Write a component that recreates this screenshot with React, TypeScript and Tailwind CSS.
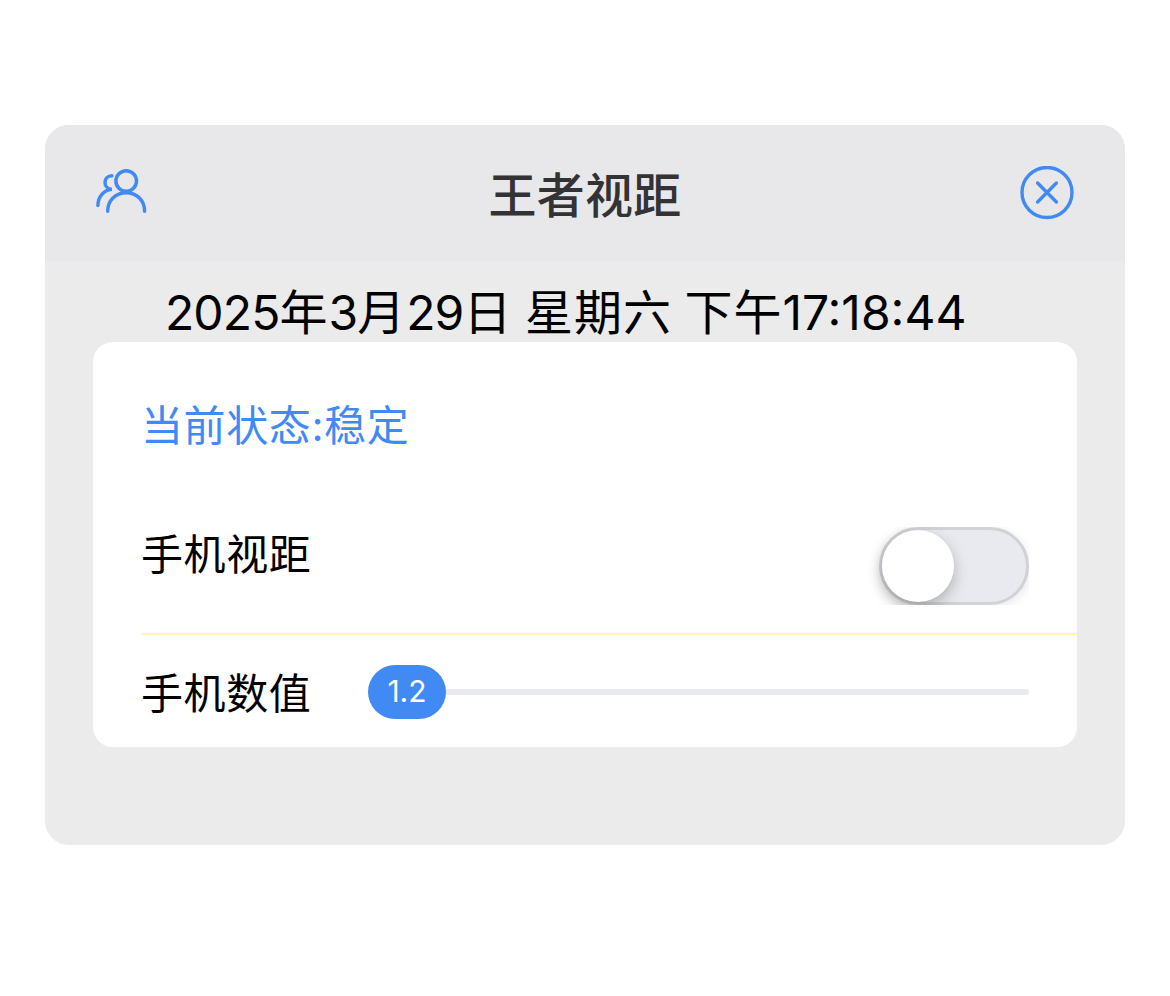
import { useState } from "react";

const UsersIcon = () => (
	<svg width="54" height="48" viewBox="0 0 54 48" fill="none" stroke="#428af3" strokeWidth="3.5" strokeLinecap="round">
		<circle cx="30.2" cy="15" r="10.3" />
		<path d="M11.7 45.2C11.7 34.8 19.4 26.7 30.2 26.7S48.6 34.8 48.6 45.2" />
		<path d="M15.9 9.8C11.7 9.9 9 12.7 9 16.4c0 3.6 2.700 6.700 6.900 6.800C7.900 23.900 1.900 30.600 1.900 39.500" />
	</svg>
);

const CloseIcon = () => (
	<svg width="54" height="54" viewBox="0 0 54 54" fill="none" stroke="#428af3" strokeWidth="3.4" strokeLinecap="round">
		<circle cx="27" cy="26.5" r="25" />
		<path d="M17.6 17 36.4 36M36.4 17 17.6 36" />
	</svg>
);

function Header() {
	return (
		<header className="flex h-[136px] items-center justify-between bg-[#e8e8ea] px-[51px]">
			<button className="flex w-[54px] pb-[6px]" aria-label="users">
				<UsersIcon />
			</button>
			<h1 className="pt-[5px] text-[48px] leading-[60px] font-medium tracking-[0.2px] text-[#333335]">王者视距</h1>
			<button className="flex w-[54px]" aria-label="close">
				<CloseIcon />
			</button>
		</header>
	);
}

function DateLine() {
	return (
		<div className="flex h-[81px] items-center pt-[22px] pl-[72px] text-[48px] leading-[60px] whitespace-nowrap">
			<p className="tracking-[1px] [word-spacing:-2px]">
				<span className="tracking-[-0.9px]">2025</span>年<span className="tracking-[-0.9px]">3</span>月
				<span className="tracking-[-0.9px]">29</span>日 星期六 下午<span className="tracking-normal">17:18:44</span>
			</p>
		</div>
	);
}

function Switch({ checked, onChange }: { checked: boolean; onChange: () => void }) {
	return (
		<div className="-ml-6 overflow-hidden pl-6">
			<button
				role="switch"
				aria-checked={checked}
				onClick={onChange}
				className={`flex h-[78px] w-[150px] items-center rounded-full border-3 border-[#d1d2d6] bg-[#e9eaef] shadow-[0_3px_12px_rgba(0,0,0,0.1)] ${
					checked ? "justify-end" : "justify-start"
				}`}
			>
				<span className="size-[72px] rounded-full bg-white shadow-[0_6px_15px_rgba(0,0,0,0.25)]" />
			</button>
		</div>
	);
}

function Slider({ value }: { value: number }) {
	return (
		<div className="flex w-[661px] items-center">
			<div className="flex h-[54px] w-[78px] items-center justify-center rounded-full bg-[#428af3] pb-[3px] text-[30px] leading-none tracking-normal text-white">
				{value}
			</div>
			<div className="h-[6px] flex-1 rounded-r-full bg-[#e9eaef]" />
		</div>
	);
}

export default function App() {
	const [enabled, setEnabled] = useState(false);

	return (
		<div className="h-[996px] w-[1170px] bg-white px-[45px] pt-[125px] font-['Inter','Noto_Sans_CJK_SC',sans-serif] text-black">
			<main className="h-[720px] overflow-hidden rounded-3xl bg-[#ebebeb]">
				<Header />
				<div className="px-12">
					<DateLine />
					<section className="h-[405px] rounded-[20px] bg-white pl-12 text-[42px] leading-[60px] tracking-[0.6px]">
						<div className="flex h-[146px] items-center pt-[22px] text-[#428af3]">当前状态:稳定</div>
						<div className="flex h-[147px] items-center justify-between border-b-2 border-[#fff8b0] pt-[10px] pr-12">
							<span className="pb-[22px]">手机视距</span>
							<Switch checked={enabled} onChange={() => setEnabled(!enabled)} />
						</div>
						<div className="flex h-[112px] items-center justify-between pt-[2px] pr-12">
							<span className="pt-[3px]">手机数值</span>
							<Slider value={1.2} />
						</div>
					</section>
				</div>
			</main>
		</div>
	);
}
